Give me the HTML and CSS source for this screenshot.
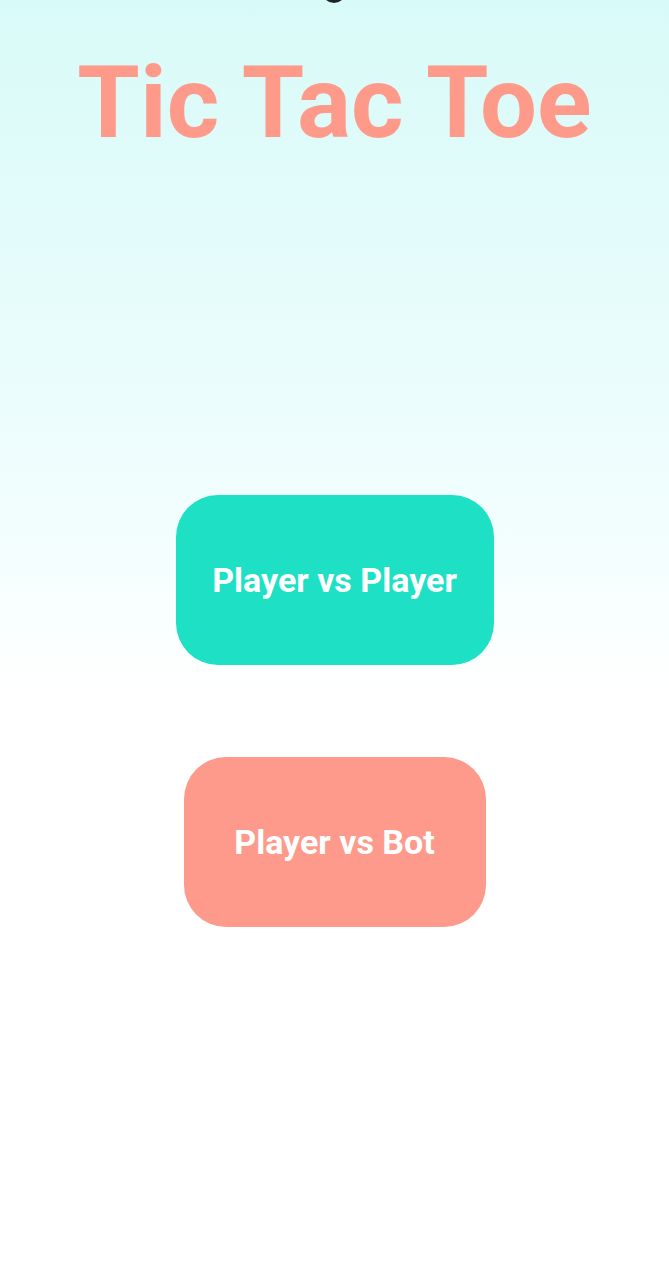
FILE: index.html
```html
<!DOCTYPE html>
<html lang="en">
<head>
<meta charset="utf-8">
<title>Tic Tac Toe</title>
<link rel="stylesheet" href="styles.css">
</head>
<body>
  <div class="screen">
    <div class="camera"></div>
    <h1 class="title">Tic Tac Toe</h1>
    <div class="menu">
      <button class="btn btn-pvp">Player vs Player</button>
      <button class="btn btn-bot">Player vs Bot</button>
    </div>
  </div>
</body>
</html>
```

FILE: styles.css
```css
html, body {
  margin: 0;
  padding: 0;
}
body {
  width: 669px;
  height: 1280px;
  background: #ffffff;
  font-family: Roboto, "Noto Sans", "Liberation Sans", sans-serif;
  overflow: hidden;
}
.screen {
  position: relative;
  height: 1280px;
  background: linear-gradient(to bottom, #d8faf8 0px, #e6fcfb 300px, #f4fefe 560px, #ffffff 690px, #ffffff 1280px);
  display: flex;
  flex-direction: column;
  align-items: center;
}
.camera {
  position: absolute;
  top: -21px;
  left: 322px;
  width: 24px;
  height: 24px;
  border-radius: 50%;
  background: #1e2426;
}
.title {
  margin: 52px 0 0 0;
  height: 101px;
  font-size: 101px;
  line-height: 1;
  font-weight: 700;
  color: #fd9a8a;
  letter-spacing: 0;
}
.menu {
  margin-top: 342px;
  display: flex;
  flex-direction: column;
  align-items: center;
  gap: 92px;
}
.btn {
  height: 170px;
  border: none;
  border-radius: 42px;
  font-family: Roboto, "Noto Sans", "Liberation Sans", sans-serif;
  font-weight: 700;
  font-size: 34px;
  color: #ffffff;
  display: flex;
  align-items: center;
  justify-content: center;
  padding: 0;
}
.btn-pvp {
  width: 318px;
  background: #1ee0c5;
}
.btn-bot {
  width: 302px;
  background: #fd9a8b;
}
```
